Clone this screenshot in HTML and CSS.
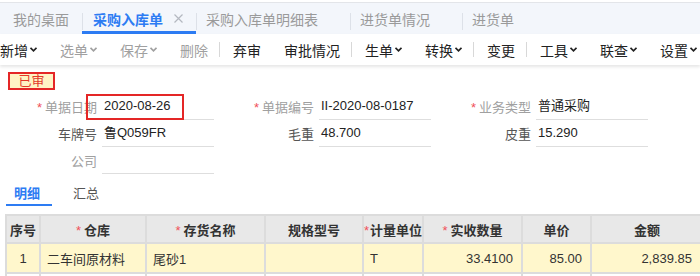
FILE: index.html
```html
<!DOCTYPE html>
<html>

<head>
    <title>采购入库单</title>
    <meta charset='UTF-8'>
    <meta name='viewport' content='width=device-width, initial-scale=1.0'>
    <link rel="stylesheet" href="styles.css">
</head>

<body>
    <div class='tabs'>
        <div class='tab home'>我的桌面</div>
        <div class='tab active'>采购入库单<svg class='close' width='9' height='9' viewBox='0 0 9 9'>
                <path d='M0.5 0.5L8.5 8.5M8.5 0.5L0.5 8.5' stroke='#b4b8c0' stroke-width='1.2' fill='none' />
            </svg></div>
        <div class='tab'>采购入库单明细表</div>
        <div class='tab'>进货单情况</div>
        <div class='tab last'>进货单</div>
    </div>

    <div class='toolbar'>
        <span class='tool'>新增<svg class='chev' width='7' height='5' viewBox='0 0 7 5'>
                <path d='M0.5 0.8L3.5 3.8L6.5 0.8' /></svg></span>
        <span class='tool muted'>选单<svg class='chev' width='7' height='5' viewBox='0 0 7 5'>
                <path d='M0.5 0.8L3.5 3.8L6.5 0.8' /></svg></span>
        <span class='tool muted'>保存<svg class='chev' width='7' height='5' viewBox='0 0 7 5'>
                <path d='M0.5 0.8L3.5 3.8L6.5 0.8' /></svg></span>
        <span class='tool muted'>删除</span>
        <span class='sep'></span>
        <span class='tool'>弃审</span>
        <span class='tool'>审批情况</span>
        <span class='sep'></span>
        <span class='tool'>生单<svg class='chev' width='7' height='5' viewBox='0 0 7 5'>
                <path d='M0.5 0.8L3.5 3.8L6.5 0.8' /></svg></span>
        <span class='tool'>转换<svg class='chev' width='7' height='5' viewBox='0 0 7 5'>
                <path d='M0.5 0.8L3.5 3.8L6.5 0.8' /></svg></span>
        <span class='sep'></span>
        <span class='tool'>变更</span>
        <span class='sep'></span>
        <span class='tool'>工具<svg class='chev' width='7' height='5' viewBox='0 0 7 5'>
                <path d='M0.5 0.8L3.5 3.8L6.5 0.8' /></svg></span>
        <span class='tool'>联查<svg class='chev' width='7' height='5' viewBox='0 0 7 5'>
                <path d='M0.5 0.8L3.5 3.8L6.5 0.8' /></svg></span>
        <span class='tool'>设置<svg class='chev' width='7' height='5' viewBox='0 0 7 5'>
                <path d='M0.5 0.8L3.5 3.8L6.5 0.8' /></svg></span>
        <span class='sep'></span>
    </div>

    <div class='form'>
        <div class='badge'>已审</div>
        <div class='row r1'>
            <div class='field'>
                <label class='lbl'><span class='star'>*</span>单据日期</label>
                <div class='val'>2020-08-26</div>
                <div class='mark'></div>
            </div>
            <div class='field'>
                <label class='lbl'><span class='star'>*</span>单据编号</label>
                <div class='val'>II-2020-08-0187</div>
            </div>
            <div class='field'>
                <label class='lbl'><span class='star'>*</span>业务类型</label>
                <div class='val'>普通采购</div>
            </div>
        </div>
        <div class='row r2'>
            <div class='field'>
                <label class='lbl dark'>车牌号</label>
                <div class='val'>鲁Q059FR</div>
            </div>
            <div class='field'>
                <label class='lbl dark'>毛重</label>
                <div class='val plain'>48.700</div>
            </div>
            <div class='field'>
                <label class='lbl dark'>皮重</label>
                <div class='val plain'>15.290</div>
            </div>
            <div class='field edge'>
                <label class='lbl dark'>净重</label>
            </div>
        </div>
        <div class='row r3'>
            <div class='field'>
                <label class='lbl'>公司</label>
                <div class='val'></div>
            </div>
        </div>
    </div>

    <div class='subtabs'>
        <div class='subtab active'>明细</div>
        <div class='subtab'>汇总</div>
    </div>

    <table class='grid'>
        <colgroup>
            <col style='width:34px'>
            <col style='width:106px'>
            <col style='width:119px'>
            <col style='width:98px'>
            <col style='width:60px'>
            <col style='width:99px'>
            <col style='width:69px'>
            <col style='width:112px'>
        </colgroup>
        <tr>
            <th>序号</th>
            <th><span class='star'>*</span>仓库</th>
            <th><span class='star'>*</span>存货名称</th>
            <th>规格型号</th>
            <th class='tight'><span class='star'>*</span>计量单位</th>
            <th><span class='star'>*</span>实收数量</th>
            <th>单价</th>
            <th>金额</th>
        </tr>
        <tr class='sel'>
            <td class='c'>1</td>
            <td>二车间原材料</td>
            <td>尾砂1</td>
            <td></td>
            <td>T</td>
            <td class='n'>33.4100</td>
            <td class='n'>85.00</td>
            <td class='n last'>2,839.85</td>
        </tr>
        <tr>
            <td></td>
            <td></td>
            <td></td>
            <td></td>
            <td></td>
            <td></td>
            <td></td>
            <td></td>
        </tr>
    </table>
</body>

</html>
```

FILE: styles.css
```css
body {
    margin: 0;
    width: 700px;
    height: 276px;
    overflow: hidden;
    background-color: #fff;
    font-family: "Liberation Sans", "Noto Sans CJK SC", sans-serif;
    color: #333;
}

/* page tabs */
.tabs {
    margin-top: 2px;
    height: 31px;
    border-top: 1px solid #e3e5e9;
    background-color: #f3f6fb;
    display: flex;
    align-items: stretch;
    font-size: 14px;
    color: #9a9a9a;
    white-space: nowrap;
}

.tab {
    display: flex;
    align-items: center;
    padding: 0 32px 0 10px;
    position: relative;
}

.tab::before {
    content: "";
    position: absolute;
    left: 0;
    top: 10px;
    height: 17px;
    border-left: 1px solid #dde1e8;
}

.tab.home {
    padding: 0 13px 0 13px;
}

.tab.home::before {
    display: none;
}

.tab.active {
    padding: 0 13px 0 11px;
    color: #2d7cf3;
    font-weight: bold;
    box-shadow: inset 0 -3px 0 #2d7cf3;
}

.close {
    margin-left: 11px;
}

/* toolbar */
.toolbar {
    height: 31px;
    display: flex;
    align-items: center;
    gap: 23px;
    font-size: 14px;
    color: #222;
    white-space: nowrap;
    box-shadow: 0 2px 3px rgba(0, 0, 0, 0.1);
    position: relative;
}

.tool {
    display: flex;
    align-items: center;
}

.tool.muted {
    color: #a0a0a0;
}

.chev {
    margin-left: 2px;
    fill: none;
    stroke: currentColor;
    stroke-width: 1.7;
}

.sep {
    width: 1px;
    height: 15px;
    background-color: #d8d8d8;
    margin: 0 -10px 0 -12px;
}

/* form */
.form {
    padding-top: 7px;
}

.badge {
    margin-left: 8px;
    width: 43px;
    height: 14px;
    border: 2px solid #e42626;
    background-color: #fff3c4;
    color: #e23a2a;
    font-size: 13px;
    line-height: 14px;
    text-align: center;
}

.row {
    display: flex;
    height: 27px;
}

.row.r1 {
    margin-top: 3px;
}

.field {
    width: 217px;
    flex: none;
    display: flex;
    align-items: center;
    position: relative;
    font-size: 13px;
}

.field.edge {
    width: 50px;
    overflow: hidden;
}

.lbl {
    width: 97px;
    flex: none;
    text-align: right;
    color: #a0a0a0;
    white-space: nowrap;
}

.lbl.dark {
    color: #555;
}

.star {
    color: #f0505a;
    font-weight: normal;
    margin-right: 3px;
}

.val {
    margin-left: 5px;
    width: 110px;
    height: 26px;
    line-height: 26px;
    padding-left: 2px;
    border-bottom: 1px solid #dedede;
    color: #222;
    white-space: nowrap;
}

.mark {
    position: absolute;
    left: 86px;
    top: 1px;
    width: 94px;
    height: 22px;
    border: 2px solid #e42626;
}

/* detail tabs */
.subtabs {
    display: flex;
    gap: 13px;
    padding-left: 6px;
    margin-top: 4px;
    height: 28px;
    font-size: 13px;
    color: #555;
}

.subtab {
    display: flex;
    align-items: center;
    padding: 0 12px 0 8px;
}

.subtab.active {
    color: #2d7cf3;
    font-weight: bold;
    box-shadow: inset 0 -2px 0 #2d7cf3;
}

/* grid */
.grid {
    margin: 8px 0 0 5px;
    border-collapse: collapse;
    table-layout: fixed;
    width: 697px;
    font-size: 13px;
}

.grid th,
.grid td {
    border: 2px solid #dcdcdc;
    padding: 0 6px;
    white-space: nowrap;
    overflow: hidden;
}

.grid th {
    height: 26px;
    background-color: #e8e8e8;
    color: #333;
    font-weight: bold;
    padding: 0;
}

.grid th.tight .star {
    margin-right: 1px;
}

.grid td {
    height: 28px;
    color: #333;
}

.grid tr.sel td {
    background-color: #fff7cc;
}

.grid td.c {
    text-align: center;
}

.grid td.n {
    text-align: right;
    padding-right: 8px;
}

.grid td.n.last {
    padding-right: 10px;
}
```
